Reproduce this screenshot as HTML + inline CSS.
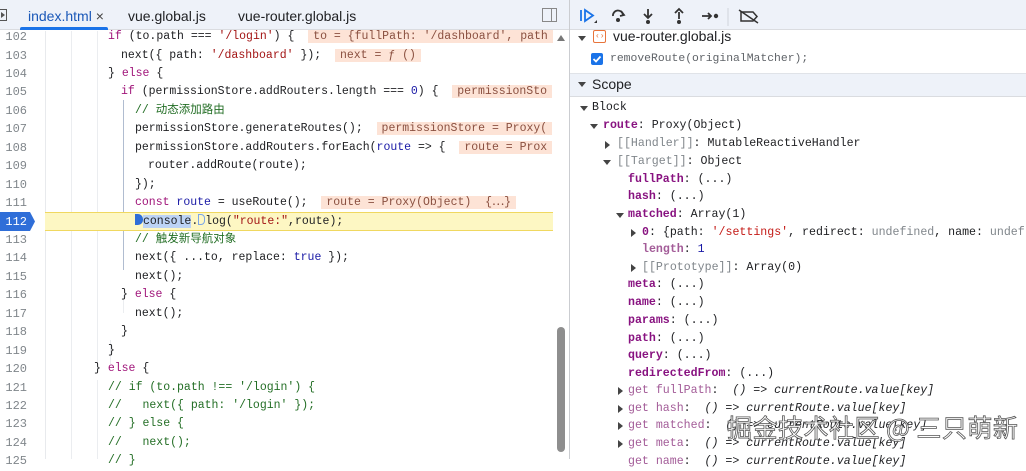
<!DOCTYPE html>
<html><head><meta charset="utf-8">
<style>
*{margin:0;padding:0;box-sizing:border-box}
body{width:1026px;height:459px;overflow:hidden;background:#fff;position:relative;font-family:"Liberation Mono","Noto Sans CJK SC",monospace;color:#202124}
.a{position:absolute;white-space:pre}
.c{font-size:11.5px;line-height:18px;height:18px}
.ln{position:absolute;left:0;width:27px;text-align:right;font-size:12px;color:#80868b;line-height:18px;font-family:"Liberation Mono",monospace}
.k{color:#a0157a}.s{color:#a31515}.cm{color:#236e25}.b{color:#1a1aa6}
.iv{background:#fde3d6;color:#8a5040;padding:0 5px}
.r{font-size:11.6px;line-height:18px}
.p{color:#881280;font-weight:bold}
.d{color:#a35c98}
.g{color:#80868b}
.tri{display:inline-block;width:0;height:0}
.tr{border-top:4px solid transparent;border-bottom:4px solid transparent;border-left:5px solid #444}
.td{border-left:4px solid transparent;border-right:4px solid transparent;border-top:5px solid #444}
.ui{font-family:"Liberation Sans","Noto Sans CJK SC",sans-serif}
</style></head><body>
<div class="a" style="left:0;top:0;width:569px;height:30px;background:#eef2f9;border-bottom:1px solid #dadce0"></div>
<div class="a" style="left:0;top:9px;width:7px;height:12px;border:1px solid #555;border-left:none"></div>
<div class="a" style="left:1px;top:12px;width:0;height:0;border-top:3px solid transparent;border-bottom:3px solid transparent;border-left:4px solid #555"></div>
<div class="a ui" style="left:28px;top:8px;font-size:14px;color:#1a58b8">index.html <span style="color:#444">×</span></div>
<div class="a" style="left:20px;top:27px;width:88px;height:3px;background:#1a73e8;border-radius:2px 2px 0 0"></div>
<div class="a ui" style="left:128px;top:8px;font-size:14px;color:#202124">vue.global.js</div>
<div class="a ui" style="left:238px;top:8px;font-size:14px;color:#202124">vue-router.global.js</div>
<div class="a" style="left:542px;top:8px;width:15px;height:14px;border:1px solid #888"></div>
<div class="a" style="left:551px;top:8px;width:1px;height:14px;background:#888"></div>

<div class="a" style="left:45px;top:31px;width:1px;height:428px;background:#e8eaed"></div>
<div class="a" style="left:71px;top:31px;width:1px;height:428px;background:#ebedf0"></div>
<div class="a" style="left:97px;top:31px;width:1px;height:340px;background:#ebedf0"></div>
<div class="a" style="left:97px;top:380px;width:1px;height:79px;background:#ebedf0"></div>
<div class="a" style="left:110px;top:340px;width:1px;height:24px;background:#ebedf0"></div>
<div class="a" style="left:123px;top:100px;width:1px;height:170px;background:#b0bcd0"></div>
<div class="a" style="left:123px;top:295px;width:1px;height:18px;background:#ebedf0"></div>

<div class="a" style="left:45px;top:212px;width:508px;height:19px;background:#fdf7c3;border-top:1px solid #f0d860;border-bottom:1px solid #f0d860"></div>
<svg class="a" style="left:0;top:212px" width="36" height="19"><path d="M0 0H30L35 9.5L30 19H0Z" fill="#2f6ed8"/></svg>

<div class="ln" style="top:28px">102</div>
<div class="ln" style="top:46.5px">103</div>
<div class="ln" style="top:65px">104</div>
<div class="ln" style="top:83.4px">105</div>
<div class="ln" style="top:101.8px">106</div>
<div class="ln" style="top:120.3px">107</div>
<div class="ln" style="top:138.7px">108</div>
<div class="ln" style="top:157.2px">109</div>
<div class="ln" style="top:175.6px">110</div>
<div class="ln" style="top:194px">111</div>
<div class="ln" style="top:212.5px;color:#fff">112</div>
<div class="ln" style="top:231px">113</div>
<div class="ln" style="top:249.4px">114</div>
<div class="ln" style="top:267.8px">115</div>
<div class="ln" style="top:286.3px">116</div>
<div class="ln" style="top:304.7px">117</div>
<div class="ln" style="top:323.1px">118</div>
<div class="ln" style="top:341.6px">119</div>
<div class="ln" style="top:360px">120</div>
<div class="ln" style="top:378.5px">121</div>
<div class="ln" style="top:396.9px">122</div>
<div class="ln" style="top:415.3px">123</div>
<div class="ln" style="top:433.8px">124</div>
<div class="ln" style="top:452.2px">125</div>

<div class="a c" style="left:108px;top:28px"><span class="k">if</span> (to.path === <span class="s">'/login'</span>) {  <span class="iv">to = {fullPath: '/dashboard', path</span></div>
<div class="a c" style="left:121px;top:46.5px">next({ path: <span class="s">'/dashboard'</span> });  <span class="iv">next = ƒ ()</span></div>
<div class="a c" style="left:108px;top:65px">} <span class="k">else</span> {</div>
<div class="a c" style="left:121px;top:83.4px"><span class="k">if</span> (permissionStore.addRouters.length === <span class="b">0</span>) {  <span class="iv">permissionSto</span></div>
<div class="a c cm" style="left:135px;top:101.8px">// 动态添加路由</div>
<div class="a c" style="left:135px;top:120.3px">permissionStore.generateRoutes();  <span class="iv">permissionStore = Proxy(</span></div>
<div class="a c" style="left:135px;top:138.7px">permissionStore.addRouters.forEach(<span class="b">route</span> => {  <span class="iv">route = Prox</span></div>
<div class="a c" style="left:148px;top:157.2px">router.addRoute(route);</div>
<div class="a c" style="left:135px;top:175.6px">});</div>
<div class="a c" style="left:135px;top:194px"><span class="k">const</span> <span class="b">route</span> = useRoute();  <span class="iv">route = Proxy(Object)  {⋯}</span></div>
<div class="a c" style="left:135px;top:212.5px"><span style="display:inline-block;width:8px;height:11px;background:#2f6ed8;border-radius:0 5px 5px 0;vertical-align:-1px"></span><span style="background:#bcd3f5">console</span>.<span style="display:inline-block;width:7px;height:11px;border:1px solid #7aa6e8;border-radius:0 4px 4px 0;vertical-align:-1px"></span>log(<span class="s">"route:"</span>,route);</div>
<div class="a c cm" style="left:135px;top:231px">// 触发新导航对象</div>
<div class="a c" style="left:135px;top:249.4px">next({ ...to, replace: <span class="b">true</span> });</div>
<div class="a c" style="left:135px;top:267.8px">next();</div>
<div class="a c" style="left:121px;top:286.3px">} <span class="k">else</span> {</div>
<div class="a c" style="left:135px;top:304.7px">next();</div>
<div class="a c" style="left:121px;top:323.1px">}</div>
<div class="a c" style="left:108px;top:341.6px">}</div>
<div class="a c" style="left:94px;top:360px">} <span class="k">else</span> {</div>
<div class="a c cm" style="left:108px;top:378.5px">// if (to.path !== '/login') {</div>
<div class="a c cm" style="left:108px;top:396.9px">//   next({ path: '/login' });</div>
<div class="a c cm" style="left:108px;top:415.3px">// } else {</div>
<div class="a c cm" style="left:108px;top:433.8px">//   next();</div>
<div class="a c cm" style="left:108px;top:452.2px">// }</div>

<div class="a" style="left:553px;top:31px;width:16px;height:428px;background:#fff"></div>
<div class="a" style="left:557px;top:35px;width:0;height:0;border-left:4px solid transparent;border-right:4px solid transparent;border-bottom:6px solid #777"></div>
<div class="a" style="left:557px;top:327px;width:8px;height:125px;background:#8e8e8e;border-radius:4px"></div>

<div class="a" style="left:569px;top:0;width:1px;height:459px;background:#cbcdd1"></div>

<div class="a" style="left:570px;top:0;width:456px;height:30px;background:#eef2f9;border-bottom:1px solid #dadce0"></div>
<svg class="a" style="left:578px;top:6px" width="190" height="20" fill="none" stroke-width="1.8">
 <path d="M3 4V15" stroke="#1a73e8"/><path d="M7 4L15 9.5L7 15Z" stroke="#1a73e8"/><path d="M16 17L19 14V17Z" fill="#333" stroke="none"/>
 <path d="M35 10A5 5 0 0 1 45 9" stroke="#333"/><path d="M43 5L46 9L42 10" stroke="#333"/><circle cx="40" cy="14" r="2" fill="#333" stroke="none"/>
 <path d="M70 3V11M66 8L70 12L74 8" stroke="#333"/><circle cx="70" cy="16" r="2" fill="#333" stroke="none"/>
 <path d="M101 6V13M97 7L101 3L105 7" stroke="#333"/><circle cx="101" cy="16" r="2" fill="#333" stroke="none"/>
 <path d="M124 10H133M130 7L133 10L130 13" stroke="#333"/><circle cx="138" cy="10" r="2.2" fill="#333" stroke="none"/>
 <path d="M150 2V20" stroke="#d0d4da" stroke-width="1"/>
 <path d="M163 6H175L179 10.5L175 15H163Z" stroke="#333" stroke-width="1.5"/><path d="M161 4L180 17" stroke="#333" stroke-width="1.5"/>
</svg>

<div class="a tri td" style="left:578px;top:36px"></div>
<div class="a" style="left:593px;top:30px;width:13px;height:13px;border:1.5px solid #e8743b;border-radius:2px"></div>
<div class="a" style="left:595px;top:30px;font-size:8px;color:#e8743b;line-height:13px">‹›</div>
<div class="a ui" style="left:613px;top:28px;font-size:14px">vue-router.global.js</div>
<div class="a" style="left:591px;top:53px;width:12px;height:12px;background:#1a73e8;border-radius:2px"></div>
<svg class="a" style="left:591px;top:53px" width="12" height="12"><path d="M2.5 6L5 8.5L9.5 3.5" stroke="#fff" stroke-width="1.8" fill="none"/></svg>
<div class="a" style="left:610px;top:50px;font-size:11.4px;color:#5f6368;line-height:18px">removeRoute(originalMatcher);</div>

<div class="a" style="left:570px;top:73px;width:456px;height:24px;background:#eef2f9;border-top:1px solid #e0e3e8;border-bottom:1px solid #dadce0"></div>
<div class="a tri td" style="left:578px;top:82px"></div>
<div class="a ui" style="left:592px;top:76px;font-size:14px">Scope</div>

<div class="a tri td" style="left:580px;top:106px"></div>
<div class="a r" style="left:592px;top:99px">Block</div>
<div class="a tri td" style="left:590px;top:124px"></div>
<div class="a r" style="left:603px;top:117px"><span class="p">route</span>: Proxy(Object)</div>
<div class="a tri tr" style="left:605px;top:141px"></div>
<div class="a r" style="left:617px;top:135px"><span class="g">[[Handler]]</span>: MutableReactiveHandler</div>
<div class="a tri td" style="left:603px;top:160px"></div>
<div class="a r" style="left:617px;top:153px"><span class="g">[[Target]]</span>: Object</div>
<div class="a r" style="left:628px;top:171px"><span class="p">fullPath</span>: (...)</div>
<div class="a r" style="left:628px;top:188px"><span class="p">hash</span>: (...)</div>
<div class="a tri td" style="left:616px;top:213px"></div>
<div class="a r" style="left:628px;top:206px"><span class="p">matched</span>: Array(1)</div>
<div class="a tri tr" style="left:631px;top:229px"></div>
<div class="a r" style="left:642px;top:224px"><span class="p">0</span>: {path: <span style="color:#c41a16">'/settings'</span>, redirect: <span class="g">undefined</span>, name: <span class="g">undef</span></div>
<div class="a r" style="left:642px;top:241px"><span class="d" style="font-weight:bold">length</span>: <span class="b">1</span></div>
<div class="a tri tr" style="left:631px;top:264px"></div>
<div class="a r" style="left:642px;top:259px"><span class="g">[[Prototype]]</span>: Array(0)</div>
<div class="a r" style="left:628px;top:276px"><span class="p">meta</span>: (...)</div>
<div class="a r" style="left:628px;top:294px"><span class="p">name</span>: (...)</div>
<div class="a r" style="left:628px;top:312px"><span class="p">params</span>: (...)</div>
<div class="a r" style="left:628px;top:330px"><span class="p">path</span>: (...)</div>
<div class="a r" style="left:628px;top:347px"><span class="p">query</span>: (...)</div>
<div class="a r" style="left:628px;top:365px"><span class="p">redirectedFrom</span>: (...)</div>
<div class="a tri tr" style="left:618px;top:387px"></div>
<div class="a r" style="left:628px;top:382px"><span class="d">get fullPath</span>:  <i>() =&gt; currentRoute.value[key]</i></div>
<div class="a tri tr" style="left:618px;top:405px"></div>
<div class="a r" style="left:628px;top:400px"><span class="d">get hash</span>:  <i>() =&gt; currentRoute.value[key]</i></div>
<div class="a tri tr" style="left:618px;top:422px"></div>
<div class="a r" style="left:628px;top:417px"><span class="d">get matched</span>:  <i>() =&gt; currentRoute.value[key]</i></div>
<div class="a tri tr" style="left:618px;top:440px"></div>
<div class="a r" style="left:628px;top:435px"><span class="d">get meta</span>:  <i>() =&gt; currentRoute.value[key]</i></div>
<div class="a r" style="left:628px;top:453px"><span class="d">get name</span>:  <i>() =&gt; currentRoute.value[key]</i></div>

<div class="a" style="left:727px;top:411px;font-family:'Noto Sans CJK SC',sans-serif;font-size:25px;line-height:32px;color:#fff;-webkit-text-stroke:0.8px #555;letter-spacing:0.5px">掘金技术社区 @ 三只萌新</div>
</body></html>
